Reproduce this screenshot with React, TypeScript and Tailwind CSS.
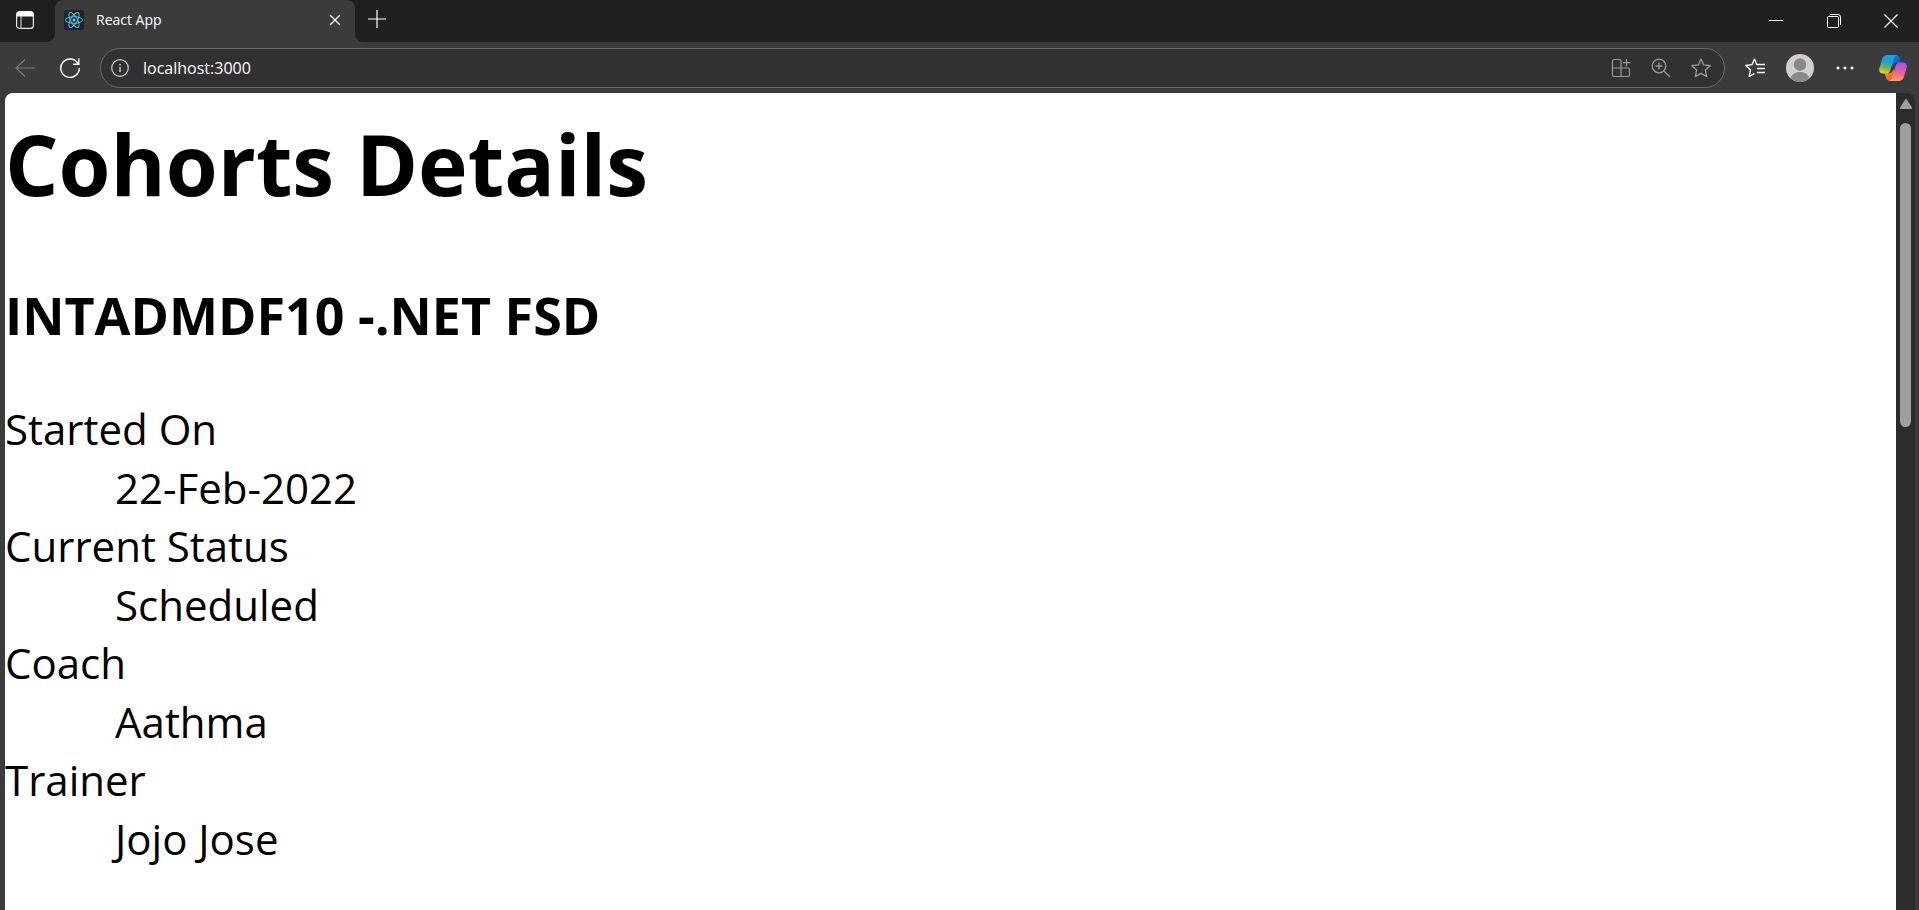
import React from "react";

const details = [
  { label: "Started On", value: "22-Feb-2022" },
  { label: "Current Status", value: "Scheduled" },
  { label: "Coach", value: "Aathma" },
  { label: "Trainer", value: "Jojo Jose" },
];

function ReactLogo() {
  return (
    <svg viewBox="0 0 20 20" className="size-5 shrink-0" fill="none" stroke="#53c1de" aria-hidden="true">
      <rect width="20" height="20" rx="2" fill="#20232a" stroke="none" />
      <circle cx="10" cy="10" r="1.5" fill="#61dafb" stroke="none" />
      <ellipse cx="10" cy="10" rx="8.5" ry="3.3" />
      <ellipse cx="10" cy="10" rx="8.5" ry="3.3" transform="rotate(60 10 10)" />
      <ellipse cx="10" cy="10" rx="8.5" ry="3.3" transform="rotate(120 10 10)" />
    </svg>
  );
}

function CopilotLogo() {
  return (
    <svg viewBox="0 0 28 26" className="h-[26px] w-7" aria-hidden="true">
      <defs>
        <linearGradient id="cpLeft" x1="0.6" y1="0" x2="0.4" y2="1">
          <stop offset="0" stopColor="#18a0ee" />
          <stop offset="0.4" stopColor="#1f9fd0" />
          <stop offset="0.7" stopColor="#62b85c" />
          <stop offset="1" stopColor="#f8cf10" />
        </linearGradient>
        <linearGradient id="cpTop" x1="0" y1="0" x2="1" y2="1">
          <stop offset="0" stopColor="#1688e0" />
          <stop offset="1" stopColor="#1b3fd0" />
        </linearGradient>
        <linearGradient id="cpRight" x1="0.6" y1="0" x2="0.4" y2="1">
          <stop offset="0" stopColor="#a553e8" />
          <stop offset="0.5" stopColor="#ee5a9c" />
          <stop offset="1" stopColor="#ffa455" />
        </linearGradient>
        <linearGradient id="cpBottom" x1="0" y1="0" x2="1" y2="1">
          <stop offset="0" stopColor="#f9a02a" />
          <stop offset="1" stopColor="#ee4b3c" />
        </linearGradient>
      </defs>
      <path d="M13 0h4c2.200 0 3.300 1.300 3.900 3.200l1.400 4.600h-4.500c-2 0-3 .8-3.600 2.600L13 12z" fill="url(#cpTop)" />
      <path d="M15 26h-4c-2.200 0-3.300-1.300-3.900-3.200L5.700 18.200h4.500c2 0 3-.8 3.600-2.600L15 14z" fill="url(#cpBottom)" />
      <path d="M8.500 0H18c-1.800.4-2.700 1.900-3.300 3.800L11.400 15c-.7 2.300-1.800 3.400-4 3.400H4C.8 18.400-.4 16 .4 13L3.200 3.800C4 1.300 6 0 8.500 0z" fill="url(#cpLeft)" />
      <path d="M19.500 26H10c1.800-.4 2.700-1.900 3.300-3.800L16.600 11c.7-2.300 1.800-3.400 4-3.400H24c3.200 0 4.400 2.400 3.600 5.400l-2.800 9.200c-.8 2.500-2.800 3.800-5.300 3.800z" fill="url(#cpRight)" />
    </svg>
  );
}

function TitleBar() {
  return (
    <div className="flex h-[42px] shrink-0 bg-[#202020]">
      <div className="flex w-[55px] items-center pb-0.5 pl-4">
        <button aria-label="Tab actions">
          <svg viewBox="0 0 18 18" className="size-[18px]" fill="none" stroke="#e6e6e6" aria-hidden="true">
            <rect x="0.6" y="0.6" width="16.800" height="16.800" rx="3" strokeWidth="1.200" />
            <path d="M1 5V3.500A2.500 2.500 0 0 1 3.500 1h11A2.500 2.500 0 0 1 17 3.500V5z" fill="#fff" stroke="#fff" />
            <path d="M5 5v12" />
          </svg>
        </button>
      </div>
      <div className="relative flex w-[300px] items-center rounded-t-lg bg-[#3b3b3b] pr-2.5 pb-0.5 pl-[9px]">
        <svg viewBox="0 0 8 8" className="absolute bottom-0 -left-2 size-2" aria-hidden="true">
          <path d="M8 0v8H0a8 8 0 0 0 8-8z" fill="#3b3b3b" />
        </svg>
        <svg viewBox="0 0 8 8" className="absolute -right-2 bottom-0 size-2" aria-hidden="true">
          <path d="M0 0v8h8a8 8 0 0 1-8-8z" fill="#3b3b3b" />
        </svg>
        <ReactLogo />
        <span className="ml-3 flex-1 text-sm text-white">React App</span>
        <button aria-label="Close tab" className="p-1">
          <svg viewBox="0 0 12 12" className="size-3" stroke="#fff" strokeWidth="1.300" aria-hidden="true">
            <path d="M1 1l10 10M11 1L1 11" />
          </svg>
        </button>
      </div>
      <button aria-label="New tab" className="ml-[13px] pb-1">
        <svg viewBox="0 0 18 18" className="size-[18px]" stroke="#fff" strokeWidth="1.200" aria-hidden="true">
          <path d="M9 0v18M0 9h18" />
        </svg>
      </button>
      <div className="ml-auto flex">
        <button aria-label="Minimize" className="flex w-[58px] items-center justify-center">
          <svg viewBox="0 0 14 14" className="size-3.5" stroke="#fff" aria-hidden="true">
            <path d="M0 6.500h14" />
          </svg>
        </button>
        <button aria-label="Restore" className="flex w-[58px] items-center justify-center">
          <svg viewBox="0 0 14 14" className="size-3.5" fill="none" stroke="#fff" aria-hidden="true">
            <rect x="0.500" y="2.500" width="11" height="11" rx="1" />
            <path d="M3 .5h8a2.500 2.500 0 0 1 2.500 2.500v8" />
          </svg>
        </button>
        <button aria-label="Close" className="flex w-14 items-center justify-center">
          <svg viewBox="0 0 14 14" className="size-3.5" stroke="#fff" strokeWidth="1.200" aria-hidden="true">
            <path d="M.5.5l13 13M13.500.5l-13 13" />
          </svg>
        </button>
      </div>
    </div>
  );
}

function Toolbar() {
  return (
    <div className="flex h-[51px] shrink-0 items-center pr-3 pl-[15px]">
      <button aria-label="Back" disabled>
        <svg viewBox="0 0 20 20" className="size-5" fill="none" stroke="#7c7c7c" strokeWidth="1.200" aria-hidden="true">
          <path d="M20 10H1M10 1.500L1 10l9 8.500" />
        </svg>
      </button>
      <button aria-label="Refresh" className="ml-[25px]">
        <svg viewBox="0 0 20 20" className="size-5" fill="none" stroke="#fff" strokeWidth="1.400" aria-hidden="true">
          <path d="M18.200 6A9.200 9.200 0 1 0 19.200 10M18.800.5v5.700h-5.700" />
        </svg>
      </button>
      <div className="ml-5 flex h-10 flex-1 items-center rounded-full border border-[#6a6a6a] bg-[#313131] pr-[13px] pl-2.5">
        <svg viewBox="0 0 18 18" className="size-[18px] shrink-0" fill="none" stroke="#cfcfcf" strokeWidth="1.200" aria-hidden="true">
          <circle cx="9" cy="9" r="8.300" />
          <path d="M9 8v5M9 5v1.500" strokeWidth="1.500" />
        </svg>
        <input
          aria-label="Address"
          defaultValue="localhost:3000"
          className="ml-3.5 min-w-0 flex-1 bg-transparent text-base text-white outline-none"
        />
        <div className="flex items-center gap-5">
          <button aria-label="Install app">
            <svg viewBox="0 0 20 20" className="size-5" fill="none" stroke="#9a9a9a" strokeWidth="1.200" aria-hidden="true">
              <path d="M10 18.500V3A1.500 1.500 0 0 0 8.500 1.500H3A1.500 1.500 0 0 0 1.500 3v14A1.500 1.500 0 0 0 3 18.500h14a1.500 1.500 0 0 0 1.500-1.500v-5.500a1.500 1.500 0 0 0-1.500-1.500H1.500M15.500 1v7.500M12 4.700h7.500" />
            </svg>
          </button>
          <button aria-label="Zoom">
            <svg viewBox="0 0 20 20" className="size-5" fill="none" stroke="#9a9a9a" strokeWidth="1.300" aria-hidden="true">
              <circle cx="8" cy="8" r="6.800" />
              <path d="M13 13l6 6M8 4.500v7M4.500 8h7" />
            </svg>
          </button>
          <button aria-label="Add to favorites">
            <svg viewBox="0 0 20 20" className="size-5" fill="none" stroke="#9a9a9a" strokeWidth="1.300" strokeLinejoin="round" aria-hidden="true">
              <path d="M10 1l2.700 5.900 6.500.8-4.800 4.400 1.300 6.500L10 15.400l-5.700 3.200 1.300-6.500L.8 7.700l6.500-.8z" />
            </svg>
          </button>
        </div>
      </div>
      <button aria-label="Favorites" className="ml-5">
        <svg viewBox="0 0 20 20" className="size-5" fill="none" stroke="#fff" strokeWidth="1.300" strokeLinejoin="round" aria-hidden="true">
          <path d="M13.500 6.500h-1.700L9.500 1 7 6.700l-6.200.8 4.600 4.300-1.200 6.600 5.300-2.800M12 6.500h8M12 10.500h8M12 14.500h8" />
        </svg>
      </button>
      <button aria-label="Profile" className="ml-[21px]">
        <svg viewBox="0 0 28 28" className="size-7" aria-hidden="true">
          <circle cx="14" cy="14" r="14" fill="#d2d0ce" />
          <circle cx="14" cy="10.500" r="6.200" fill="#8a8886" />
          <path d="M4.500 24.300C5.500 20.500 9 18 14 18s8.500 2.500 9.500 6.300A14 14 0 0 1 14 28a14 14 0 0 1-9.500-3.700z" fill="#8a8886" />
        </svg>
      </button>
      <button aria-label="Settings and more" className="ml-[22px]">
        <svg viewBox="0 0 18 18" className="size-[18px]" fill="#fff" aria-hidden="true">
          <circle cx="2" cy="9" r="1.500" />
          <circle cx="9" cy="9" r="1.500" />
          <circle cx="16" cy="9" r="1.500" />
        </svg>
      </button>
      <button aria-label="Copilot" className="ml-[25px]">
        <CopilotLogo />
      </button>
    </div>
  );
}

export default function App() {
  return (
    <div className="flex h-screen flex-col overflow-hidden bg-[#3b3b3b] font-['Open_Sans','Noto_Sans',sans-serif]">
      <TitleBar />
      <Toolbar />
      <div className="flex min-h-0 flex-1 pr-1 pl-[5px]">
        <main className="min-w-0 flex-1 overflow-hidden rounded-tl-lg bg-white pt-3 text-black">
          <h1 className="text-[84px] leading-[117px] font-bold">Cohorts Details</h1>
          <h3 className="mt-[59px] text-[52px] leading-[68px] font-bold">INTADMDF10 -.NET FSD</h3>
          <dl className="mt-[51px] text-[42px]">
            {details.map((item) => (
              <React.Fragment key={item.label}>
                <dt className="leading-[58px]">{item.label}</dt>
                <dd className="ml-[110px] leading-[59px]">{item.value}</dd>
              </React.Fragment>
            ))}
          </dl>
        </main>
        <div className="flex w-[19px] flex-col items-center rounded-tr-lg bg-[#2c2c2c] pt-1.5" aria-hidden="true">
          <svg viewBox="0 0 12 10" className="h-2.5 w-3" fill="#9f9f9f">
            <path d="M5 .8a1.200 1.200 0 0 1 2 0l4.800 7.500A1.100 1.100 0 0 1 11 10H1A1.100 1.100 0 0 1 .2 8.300z" />
          </svg>
          <div className="mt-3.5 h-[304px] w-[11px] rounded-full bg-[#9f9f9f]" />
        </div>
      </div>
    </div>
  );
}
